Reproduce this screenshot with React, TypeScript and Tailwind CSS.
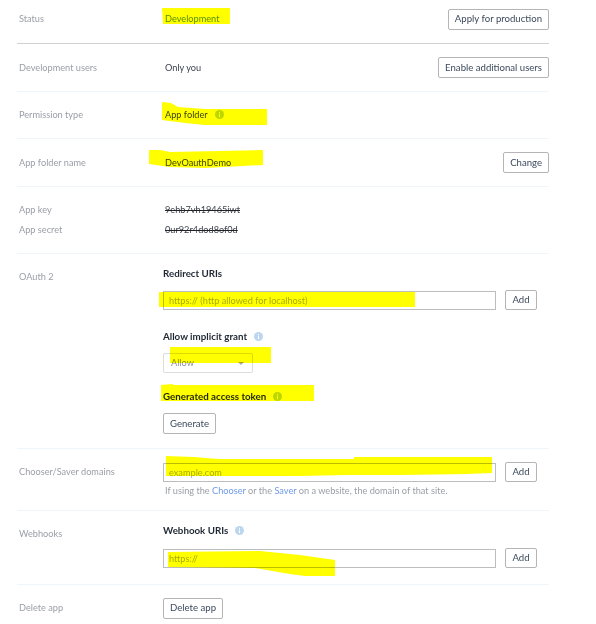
const btn =
  "h-[21px] px-[6px] border border-[#b5b5b5] rounded-[2px] bg-white text-[9.6px] leading-none text-[#3d4a5c] whitespace-nowrap";
const field =
  "h-[19px] flex-1 min-w-0 border border-[#bdbdbd] bg-white px-[5px] text-[9.2px] text-[#3d4a5c] outline-none placeholder:text-[#a9adb3]";

function Info() {
  return (
    <svg viewBox="0 0 10 10" className="w-[9px] h-[9px] shrink-0">
      <circle cx="5" cy="5" r="5" fill="#bcd6f0" />
      <rect x="4.4" y="2" width="1.2" height="1.2" fill="#fff" />
      <rect x="4.4" y="4" width="1.2" height="4" fill="#fff" />
    </svg>
  );
}

function Row({
  label,
  className,
  children,
}: {
  label: string;
  className: string;
  children?: React.ReactNode;
}) {
  return (
    <div className={"flex border-b border-[#eff5fa] " + className}>
      <div className="w-[146px] shrink-0 pl-[2px] text-[9.2px] text-[#9a9ea6]">{label}</div>
      <div className="flex-1 min-w-0">{children}</div>
    </div>
  );
}

function AddField({ placeholder }: { placeholder: string }) {
  return (
    <div className="flex items-center w-[374px]">
      <input className={field} placeholder={placeholder} readOnly />
      <button className="ml-[9px] w-[32px] h-[20px] border border-[#b5b5b5] rounded-[2px] bg-white text-[9.6px] leading-none text-[#3d4a5c]">
        Add
      </button>
    </div>
  );
}

function Highlights() {
  return (
    <svg className="absolute inset-0 mix-blend-multiply pointer-events-none" width="596" height="624">
      <g fill="#ffff00">
        <polygon points="162,8 230,8 230,24 163,24" />
        <polygon points="162,102 171,103 178,107 205,109 267,109 267,125 205,125 185,123 162,120" />
        <polygon points="149,150 160,150 170,152 263,150 263,165 205,168 170,167 149,164" />
        <polygon points="159,292 415,292 415,307 159,307" />
        <polygon points="170,347 271,347 271,363 170,363" />
        <polygon points="161,385 173,384 173,385 314,385 314,401 161,401" />
        <polygon points="166,456 194,457 218,459 354,459 354,457 492,457 492,473 467,474 400,475 347,475 300,476 166,476" />
        <polygon points="168,552 260,551 300,555 335,560 335,576 305,576 290,574 255,568 168,567" />
      </g>
    </svg>
  );
}

export default function App() {
  return (
    <div
      className="relative w-[596px] h-[624px] overflow-hidden bg-white"
      style={{ fontFamily: 'Lato, "Open Sans", sans-serif' }}
    >
      <div className="ml-[17px] w-[532px]">
        <div className="flex items-center h-[44px] border-b border-[#d2d2d2] pb-[5px]">
          <div className="w-[148px] pl-[2px] text-[9.2px] text-[#9a9ea6]">Status</div>
          <div className="flex-1 text-[9.2px] text-[#5b8f1c]">Development</div>
          <button className={btn}>Apply for production</button>
        </div>

        <Row label="Development users" className="items-center h-[48px]">
          <div className="flex items-center justify-between pl-[2px]">
            <span className="text-[9.2px] text-[#3d4450]">Only you</span>
            <button className={btn}>Enable additional users</button>
          </div>
        </Row>

        <Row label="Permission type" className="items-center h-[47px]">
          <div className="flex items-center gap-[7px] pl-[2px] text-[9.2px] text-[#3d4450]">
            App folder <Info />
          </div>
        </Row>

        <Row label="App folder name" className="items-center h-[48px]">
          <div className="flex items-center justify-between pl-[2px]">
            <span className="text-[9.2px] text-[#3d4450]">DevOauthDemo</span>
            <button className={btn}>Change</button>
          </div>
        </Row>

        <div className="flex h-[67px] pt-[13px] border-b border-[#eff5fa] text-[9.2px]">
          <div className="w-[148px] pl-[2px] text-[#9a9ea6] leading-[20px]">
            <div>App key</div>
            <div>App secret</div>
          </div>
          <div className="leading-[20px] text-[#3d4450] line-through decoration-[#222]">
            <div>9ehb7vh19465iwt</div>
            <div className="decoration-2">0ur92r4dod8of0d</div>
          </div>
        </div>

        <Row label="OAuth 2" className="h-[195px] pt-[16px]">
          <div className="text-[9.75px]">
            <div className="-mt-[4px] font-bold text-[#1f2733] leading-[14px]">Redirect URIs</div>
            <div className="mt-[10px]">
              <AddField placeholder="https:// (http allowed for localhost)" />
            </div>
            <div className="mt-[19px] flex items-center gap-[7px] font-bold text-[#1f2733] leading-[14px]">
              Allow implicit grant <Info />
            </div>
            <div className="mt-[10px] flex items-center justify-between w-[90px] h-[20px] border border-[#dcdcdc] rounded-[2px] pl-[7px] pr-[8px] text-[9.2px] text-[#8d9198]">
              Allow
              <span className="w-0 h-0 border-x-[3px] border-t-[3px] border-x-transparent border-t-[#aaaaaa]" />
            </div>
            <div className="mt-[16px] flex items-center gap-[7px] font-bold text-[#1f2733] leading-[14px]">
              Generated access token <Info />
            </div>
            <button className={"mt-[10px] block h-[20px] " + btn}>Generate</button>
          </div>
        </Row>

        <Row label="Chooser/Saver domains" className="h-[62px] pt-[16px]">
          <div className="-mt-[3px]">
            <AddField placeholder="example.com" />
            <p className="mt-[2px] pl-[2px] text-[9.2px] leading-[14px] text-[#9a9ea6]">
              If using the <span className="text-[#6f9bea]">Chooser</span> or the{" "}
              <span className="text-[#6f9bea]">Saver</span> on a website, the domain of that site.
            </p>
          </div>
        </Row>

        <Row label="Webhooks" className="h-[74px] pt-[16px]">
          <div className="-mt-[4px]">
            <div className="flex items-center gap-[7px] text-[9.75px] font-bold text-[#1f2733] leading-[14px]">
              Webhook URIs <Info />
            </div>
            <div className="mt-[11px]">
              <AddField placeholder="https://" />
            </div>
          </div>
        </Row>

        <div className="flex items-center h-[46px]">
          <div className="w-[146px] pl-[2px] text-[9.2px] text-[#9a9ea6]">Delete app</div>
          <button className={btn}>Delete app</button>
        </div>
      </div>
      <Highlights />
    </div>
  );
}
